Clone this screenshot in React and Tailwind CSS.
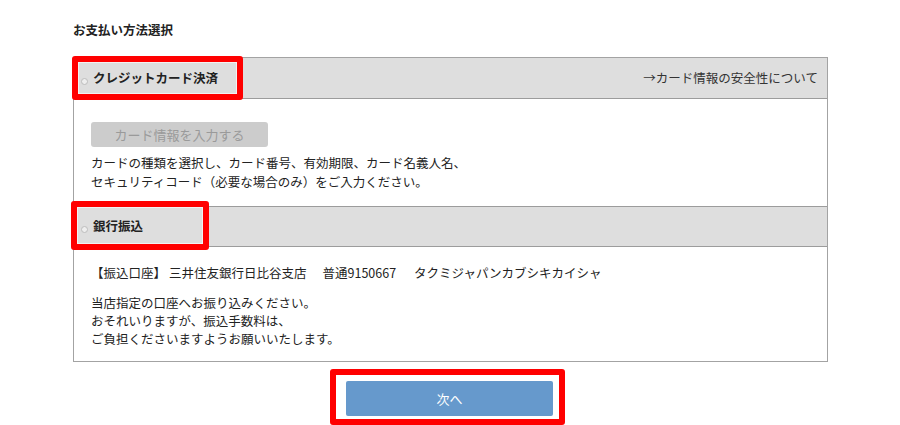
export default function App() {
    const font = { fontFamily: '"Noto Sans CJK JP", "Noto Sans", sans-serif' };

    return (
        <div className="min-h-[425px] bg-white text-[#222] text-[12.5px]" style={font}>
            <div className="ml-[73px] w-[755px] pt-[21px]">

                {/* Title */}
                <h2 className="font-bold leading-[18px]">お支払い方法選択</h2>

                {/* Payment box */}
                <div className="mt-[18px] border border-[#a3a3a3]">

                    {/* Credit card header */}
                    <div className="relative h-[41px] bg-[#dedede] border-b border-[#9c9c9c] flex items-center justify-between pr-[9px]">
                        <label className="flex items-center h-full">
                            <span className="ml-[7px] mt-[6px] w-[7px] h-[7px] rounded-full border border-[#bdbdbd] bg-[#eeeeee]" />
                            <span className="ml-[5px] font-bold">クレジットカード決済</span>
                        </label>
                        <span className="text-[#333]">→カード情報の安全性について</span>
                        <div className="absolute left-[-2px] top-[-2px] w-[171px] h-[44px] border-[6px] border-[#ff0000] rounded-[3px]">
                            <div className="w-full h-full border border-[#f2f2f2]" />
                        </div>
                    </div>

                    {/* Credit card body */}
                    <div className="pl-[17px] pt-[23px] pb-[15px] border-b border-[#9c9c9c]">
                        <button className="w-[177px] h-[25px] rounded-[3px] bg-[#cccccc] text-[#9a9a9a] text-[13px]">
                            カード情報を入力する
                        </button>
                        <p className="mt-[6px] leading-[19px]">
                            カードの種類を選択し、カード番号、有効期限、カード名義人名、<br />
                            セキュリティコード（必要な場合のみ）をご入力ください。
                        </p>
                    </div>

                    {/* Bank transfer header */}
                    <div className="relative h-[40px] bg-[#dedede] border-b border-[#9c9c9c] flex items-center">
                        <label className="flex items-center h-full">
                            <span className="ml-[7px] mt-[6px] w-[7px] h-[7px] rounded-full border border-[#bdbdbd] bg-[#eeeeee]" />
                            <span className="ml-[5px] font-bold">銀行振込</span>
                        </label>
                        <div className="absolute left-[-3px] top-[-6px] w-[138px] h-[49px] border-[6px] border-[#ff0000] rounded-[3px]">
                            <div className="w-full h-full border border-[#f2f2f2]" />
                        </div>
                    </div>

                    {/* Bank transfer body */}
                    <div className="pl-[17px] pt-[17px] pb-[13px] leading-[18px]">
                        <p className="flex whitespace-nowrap">
                            <span>【振込口座】</span>
                            <span className="ml-[3px]">三井住友銀行日比谷支店</span>
                            <span className="ml-[16px]">普通9150667</span>
                            <span className="ml-[18px]">タクミジャパンカブシキカイシャ</span>
                        </p>
                        <p className="mt-[12px]">
                            当店指定の口座へお振り込みください。<br />
                            おそれいりますが、振込手数料は、<br />
                            ご負担くださいますようお願いいたします。
                        </p>
                    </div>
                </div>

                {/* Next button */}
                <div className="flex justify-center mt-[7px]">
                    <div className="pl-[10px] pr-[6px] pt-[6px] pb-[3px] border-[6px] border-[#ff0000] rounded-[3px] mr-[6px]">
                        <button className="block w-[207px] h-[35px] bg-[#6699cc] text-white text-[13px] rounded-[2px]">
                            次へ
                        </button>
                    </div>
                </div>
            </div>
        </div>
    );
}
